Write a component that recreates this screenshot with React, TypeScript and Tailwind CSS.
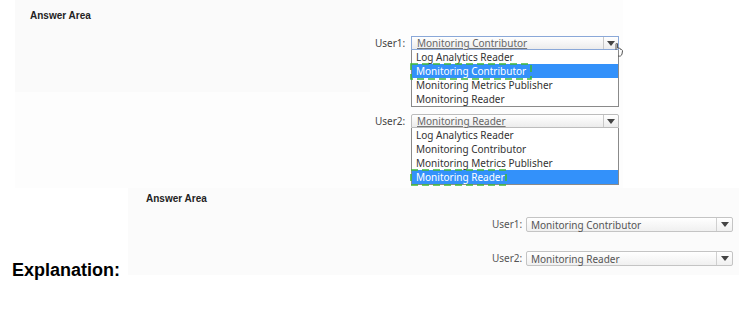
import React from 'react';

const roles = [
  'Log Analytics Reader',
  'Monitoring Contributor',
  'Monitoring Metrics Publisher',
  'Monitoring Reader',
];

const uiFont = { fontFamily: '"Noto Sans", "Open Sans", sans-serif' };
const boldFont = { fontFamily: '"Liberation Sans", Arial, sans-serif' };

function Arrow() {
  return (
    <svg width="8" height="5" viewBox="0 0 8 5">
      <path d="M0 0 L8 0 L4 5 Z" fill="#444" />
    </svg>
  );
}

function DashBox({ width }: { width: number }) {
  return (
    <svg
      className="absolute left-[-2px] top-[-1px] z-10 pointer-events-none"
      width={width}
      height="17"
    >
      <rect
        x="1"
        y="1"
        width={width - 2}
        height="15"
        fill="none"
        stroke="#3fb83a"
        strokeWidth="1.6"
        strokeDasharray="7 4"
      />
    </svg>
  );
}

function Cursor() {
  return (
    <svg
      className="absolute right-[-6px] top-[6px] z-10"
      width="10"
      height="14"
      viewBox="0 0 10 14"
    >
      <path
        d="M2 1 L2 7 M2 1 C2 0 3.5 0 3.5 1 L3.5 5 L5 5 C6 5 6 6 6 6 L7.5 6.5 C8.5 7 8.5 8 8.5 8 L8 11 C7.5 13 6 13.5 4 13"
        fill="none"
        stroke="#555"
        strokeWidth="1"
      />
    </svg>
  );
}

function OpenSelect({
  value,
  focused,
  dash,
}: {
  value: string;
  focused?: boolean;
  dash: number;
}) {
  return (
    <div className="w-[208px]" style={uiFont}>
      <div
        className={`relative flex h-[14px] items-center border bg-gradient-to-b from-white to-[#ececec] text-[10px] text-[#666] ${
          focused ? 'border-[#8aa8d8]' : 'border-[#bcbcbc] rounded-t-[2px]'
        }`}
      >
        <span className="flex-1 pl-[5px] leading-none underline decoration-[#777]">{value}</span>
        <span className="flex h-full w-[15px] items-center justify-center border-l border-[#c8c8c8]">
          <Arrow />
        </span>
        {focused && <Cursor />}
      </div>
      <div className="border-x border-b border-[#8a8a8a] bg-white text-[10px] text-[#333]">
        {roles.map((r) => (
          <div
            key={r}
            className={`relative flex h-[14px] items-center pl-[4px] leading-none ${
              r === value ? 'bg-[#3391fa] text-white' : ''
            }`}
          >
            {r}
            {r === value && <DashBox width={dash} />}
          </div>
        ))}
      </div>
    </div>
  );
}

function ClosedSelect({ value }: { value: string }) {
  return (
    <div
      className="flex h-[15px] w-[207px] items-center rounded-[2px] border border-[#c4c4c4] bg-gradient-to-b from-white to-[#f0f0f0] text-[10px] text-[#555]"
      style={uiFont}
    >
      <span className="flex-1 pl-[4px] leading-none">{value}</span>
      <span className="flex h-full w-[16px] items-center justify-center border-l border-[#d0d0d0]">
        <Arrow />
      </span>
    </div>
  );
}

export default function App() {
  return (
    <main className="min-h-screen w-[739px] bg-white">
      {/* first screenshot: open dropdowns */}
      <div className="ml-[15px] flex h-[188px] w-[608px] bg-[#fdfdfd]">
        <div className="h-[92px] w-[355px] bg-[#fafafa] pl-[15px] pt-[11px]">
          <div className="text-[10px] font-bold leading-[10px] text-[#222]" style={boldFont}>
            Answer Area
          </div>
        </div>
        <div className="ml-[5px] flex flex-col gap-[7px] pt-[36px]">
          <div className="flex items-start">
            <span className="w-[36px] text-[10px] leading-[14px] text-[#444]" style={uiFont}>
              User1:
            </span>
            <OpenSelect value="Monitoring Contributor" focused dash={122} />
          </div>
          <div className="flex items-start">
            <span className="w-[36px] text-[10px] leading-[14px] text-[#444]" style={uiFont}>
              User2:
            </span>
            <OpenSelect value="Monitoring Reader" dash={97} />
          </div>
        </div>
      </div>

      {/* second screenshot: answer */}
      <div className="flex">
        <div className="w-[128px] pl-[12px] pt-[73px]">
          <div className="text-[18px] font-bold leading-[18px] text-black" style={boldFont}>
            Explanation:
          </div>
        </div>
        <div className="flex h-[87px] flex-1 flex-col bg-[#fbfbfb]">
          <div className="pl-[18px] pt-[6px]">
            <div className="text-[10px] font-bold leading-[10px] text-[#222]" style={boldFont}>
              Answer Area
            </div>
          </div>
          <div className="ml-[364px] mt-[13px] flex flex-col gap-[19px]">
            <div className="flex items-center">
              <span className="w-[34px] text-[10px] leading-[15px] text-[#555]" style={uiFont}>
                User1:
              </span>
              <ClosedSelect value="Monitoring Contributor" />
            </div>
            <div className="flex items-center">
              <span className="w-[34px] text-[10px] leading-[15px] text-[#555]" style={uiFont}>
                User2:
              </span>
              <ClosedSelect value="Monitoring Reader" />
            </div>
          </div>
        </div>
      </div>
    </main>
  );
}
